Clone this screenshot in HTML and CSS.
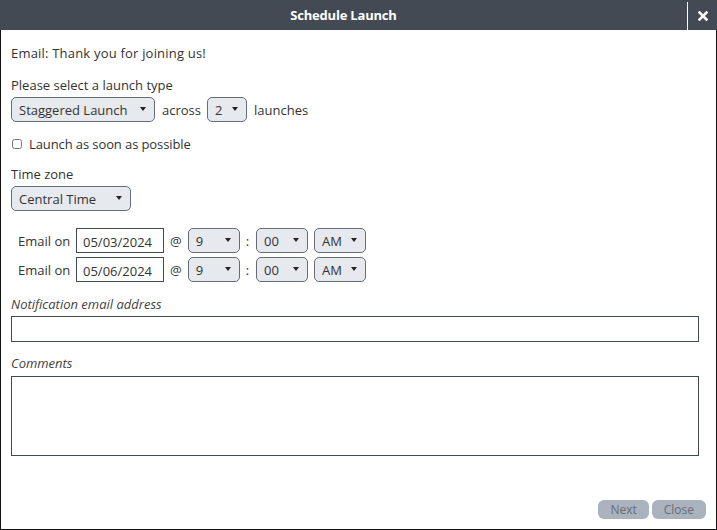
FILE: index.html
```html
<!DOCTYPE html>
<html lang="en">
<head>
    <meta charset="UTF-8">
    <title>Schedule Launch</title>
    <link rel="stylesheet" href="styles.css">
</head>
<body>
    <div class="dialog">
        <div class="dialog-header">
            <div class="dialog-title">Schedule Launch</div>
            <button class="dialog-close" aria-label="Close">
                <svg width="10" height="10" viewBox="0 0 10 10">
                    <path d="M1.5 1.5 L8.5 8.5 M8.5 1.5 L1.5 8.5" stroke="#fff" stroke-width="2.6" stroke-linecap="square"/>
                </svg>
            </button>
        </div>

        <div class="dialog-body">
            <p class="intro">Email: Thank you for joining us!</p>

            <p class="label">Please select a launch type</p>
            <div class="inline-row">
                <span class="select-wrap w-type">
                    <select>
                        <option>Staggered Launch</option>
                    </select>
                </span>
                <span>across</span>
                <span class="select-wrap w-count">
                    <select>
                        <option>2</option>
                    </select>
                </span>
                <span>launches</span>
            </div>

            <label class="check-row">
                <input type="checkbox">
                <span>Launch as soon as possible</span>
            </label>

            <p class="label">Time zone</p>
            <div class="inline-row">
                <span class="select-wrap w-zone">
                    <select>
                        <option>Central Time</option>
                    </select>
                </span>
            </div>

            <div class="schedule">
                <div class="schedule-row">
                    <span class="schedule-label">Email on</span>
                    <input class="date-input" type="text" value="05/03/2024">
                    <span class="at">@</span>
                    <span class="select-wrap w-time"><select><option>9</option></select></span>
                    <span class="colon">:</span>
                    <span class="select-wrap w-time"><select><option>00</option></select></span>
                    <span class="select-wrap w-time"><select><option>AM</option></select></span>
                </div>
                <div class="schedule-row">
                    <span class="schedule-label">Email on</span>
                    <input class="date-input" type="text" value="05/06/2024">
                    <span class="at">@</span>
                    <span class="select-wrap w-time"><select><option>9</option></select></span>
                    <span class="colon">:</span>
                    <span class="select-wrap w-time"><select><option>00</option></select></span>
                    <span class="select-wrap w-time"><select><option>AM</option></select></span>
                </div>
            </div>

            <p class="label field-label">Notification email address</p>
            <input class="text-field" type="text">

            <p class="label field-label comments-label">Comments</p>
            <textarea class="text-area"></textarea>
        </div>

        <div class="dialog-footer">
            <button class="btn">Next</button>
            <button class="btn">Close</button>
        </div>
    </div>
</body>
</html>
```

FILE: styles.css
```css
* {
    margin: 0;
    padding: 0;
    box-sizing: border-box;
}

body {
    font-family: 'Open Sans', 'Noto Sans', sans-serif;
    font-size: 13px;
    color: #333;
    background: #fff;
}

.dialog {
    width: 717px;
    height: 530px;
    border: 1px solid #111;
    border-top: none;
    display: flex;
    flex-direction: column;
}

.dialog-header {
    height: 30px;
    background: #434a54;
    display: flex;
    margin: 0 -1px;
}

.dialog-title {
    flex: 1;
    color: #fff;
    font-weight: 700;
    font-size: 13px;
    line-height: 30px;
    text-align: center;
    letter-spacing: -0.2px;
}

.dialog-close {
    width: 30px;
    border: none;
    border-left: 1px solid #fff;
    background: transparent;
    display: flex;
    align-items: center;
    justify-content: center;
    margin: 2px 0 0;
    height: 28px;
}

.dialog-body {
    flex: 1;
    padding: 14px 17px 0 10px;
}

.intro {
    line-height: 18px;
    margin-bottom: 14px;
    letter-spacing: 0.2px;
}

.label {
    line-height: 18px;
}

.inline-row {
    display: flex;
    align-items: center;
    gap: 7px;
    margin-top: 3px;
}

.select-wrap {
    position: relative;
    display: inline-block;
    height: 25px;
}

.select-wrap select {
    appearance: none;
    -webkit-appearance: none;
    width: 100%;
    height: 100%;
    font: inherit;
    color: #333;
    background: #e6e9ed;
    border: 1px solid #656d78;
    border-radius: 5px;
    padding: 0 0 0 7px;
}

.select-wrap::after {
    content: '';
    position: absolute;
    right: 9px;
    top: 10px;
    border-left: 3px solid transparent;
    border-right: 3px solid transparent;
    border-top: 4px solid #222;
    pointer-events: none;
}

.w-type { width: 144px; }
.w-count { width: 40px; margin-left: -1px; }
.w-zone { width: 120px; }
.w-time { width: 52px; }

.check-row {
    display: flex;
    align-items: center;
    gap: 7px;
    margin: 13px 0 0 1px;
    line-height: 18px;
}

.check-row span {
    letter-spacing: -0.1px;
}

.check-row input {
    width: 10px;
    height: 10px;
    margin: 0;
}

.check-row + .label {
    margin-top: 12px;
}

.schedule {
    margin-top: 17px;
    padding-left: 7px;
    display: flex;
    flex-direction: column;
    gap: 4px;
}

.schedule-row {
    display: flex;
    align-items: center;
    height: 25px;
}

.schedule-label {
    width: 58px;
}

.date-input {
    width: 88px;
    height: 25px;
    border: 1px solid #434a54;
    font: inherit;
    color: #333;
    padding: 2px 6px 0;
}

.at {
    margin: 0 6px 0 6px;
}

.colon {
    margin: 0 7px 0 6px;
}

.colon + .select-wrap {
    margin-right: 6px;
}

.field-label {
    font-style: italic;
    color: #444;
    margin-top: 13px;
    line-height: 19px;
}

.text-field {
    display: block;
    width: 100%;
    height: 26px;
    margin-top: 2px;
    border: 1px solid #434a54;
}

.comments-label {
    margin-top: 12px;
}

.text-area {
    display: block;
    width: 100%;
    height: 80px;
    margin-top: 3px;
    border: 1px solid #434a54;
    resize: none;
}

.dialog-footer {
    display: flex;
    justify-content: flex-end;
    gap: 3px;
    padding: 0 10px 10px;
}

.btn {
    height: 19px;
    padding: 0 12px;
    border: none;
    border-radius: 6px;
    background: #aab2bd;
    color: #656d78;
    font-family: inherit;
    font-size: 12px;
}
```
